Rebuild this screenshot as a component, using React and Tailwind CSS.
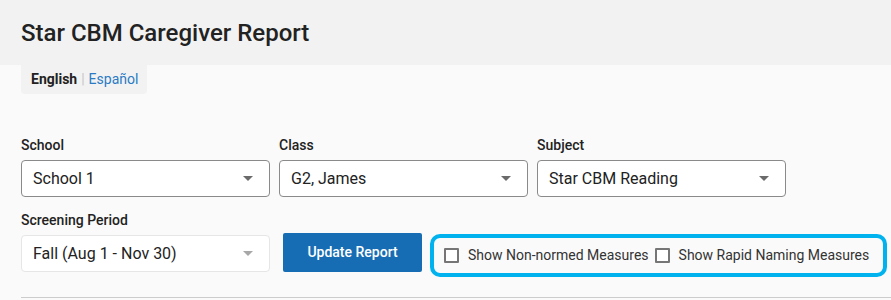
import React from "react";

function Caret({ light }) {
  return (
    <svg width="10" height="5" viewBox="0 0 10 5" className="shrink-0">
      <path d="M0 0 L10 0 L5 5 Z" fill={light ? "#a8a8a8" : "#6b6b6b"} />
    </svg>
  );
}

function Select({ value, light }) {
  return (
    <div
      className={
        "flex h-[37px] w-[249px] items-center justify-between rounded-[4px] border bg-white pl-[11px] pr-[16px] text-[16px] text-[#222] " +
        (light ? "border-[#e6e6e6]" : "border-[#8a8a8a]")
      }
    >
      <span>{value}</span>
      <Caret light={light} />
    </div>
  );
}

function Field({ label, value }) {
  return (
    <div className="flex flex-col gap-[6px]">
      <label className="text-[14px] font-medium leading-[18px] text-[#222]">{label}</label>
      <Select value={value} />
    </div>
  );
}

function Check({ label }) {
  return (
    <label className="flex items-center gap-[9px] text-[14px] text-[#333]">
      <span className="h-[15px] w-[15px] rounded-[1px] border-2 border-[#767676] bg-white" />
      {label}
    </label>
  );
}

export default function App() {
  return (
    <div className="min-h-[300px] bg-[#fafafa] font-['Roboto',sans-serif]">
      <div className="flex h-[65px] items-center bg-[#f2f2f2] px-[21px]">
        <h1 className="text-[24px] font-medium text-[#222]">Star CBM Caregiver Report</h1>
      </div>

      <div className="ml-[21px] flex h-[29px] w-[126px] items-center rounded-b-[4px] bg-[#f2f2f2] px-[10px] text-[14px]">
        <span className="font-bold text-[#222]">English</span>
        <span className="mx-[4px] text-[#c8c8c8]">|</span>
        <span className="text-[#2b7bc4]">Español</span>
      </div>

      <div className="ml-[21px] mt-[42px]">
        <div className="flex gap-[9px]">
          <Field label="School" value="School 1" />
          <Field label="Class" value="G2, James" />
          <Field label="Subject" value="Star CBM Reading" />
        </div>

        <div className="mt-[14px] text-[14px] font-medium leading-[18px] text-[#222]">Screening Period</div>
        <div className="mt-[4px] flex items-start">
          <div className="mt-[2px]">
            <Select value="Fall (Aug 1 - Nov 30)" light />
          </div>
          <button className="ml-[13px] h-[39px] w-[139px] rounded-[2px] bg-[#176db3] text-[14px] font-medium text-white">
            Update Report
          </button>
          <div className="ml-[8px] mt-[1px] flex h-[43px] w-[457px] items-center gap-[6px] rounded-[10px] border-[4px] border-[#00b2ee] pl-[10px]">
            <Check label="Show Non-normed Measures" />
            <Check label="Show Rapid Naming Measures" />
          </div>
        </div>

        <div className="mt-[20px] border-t border-[#cccccc]" />
      </div>
    </div>
  );
}
